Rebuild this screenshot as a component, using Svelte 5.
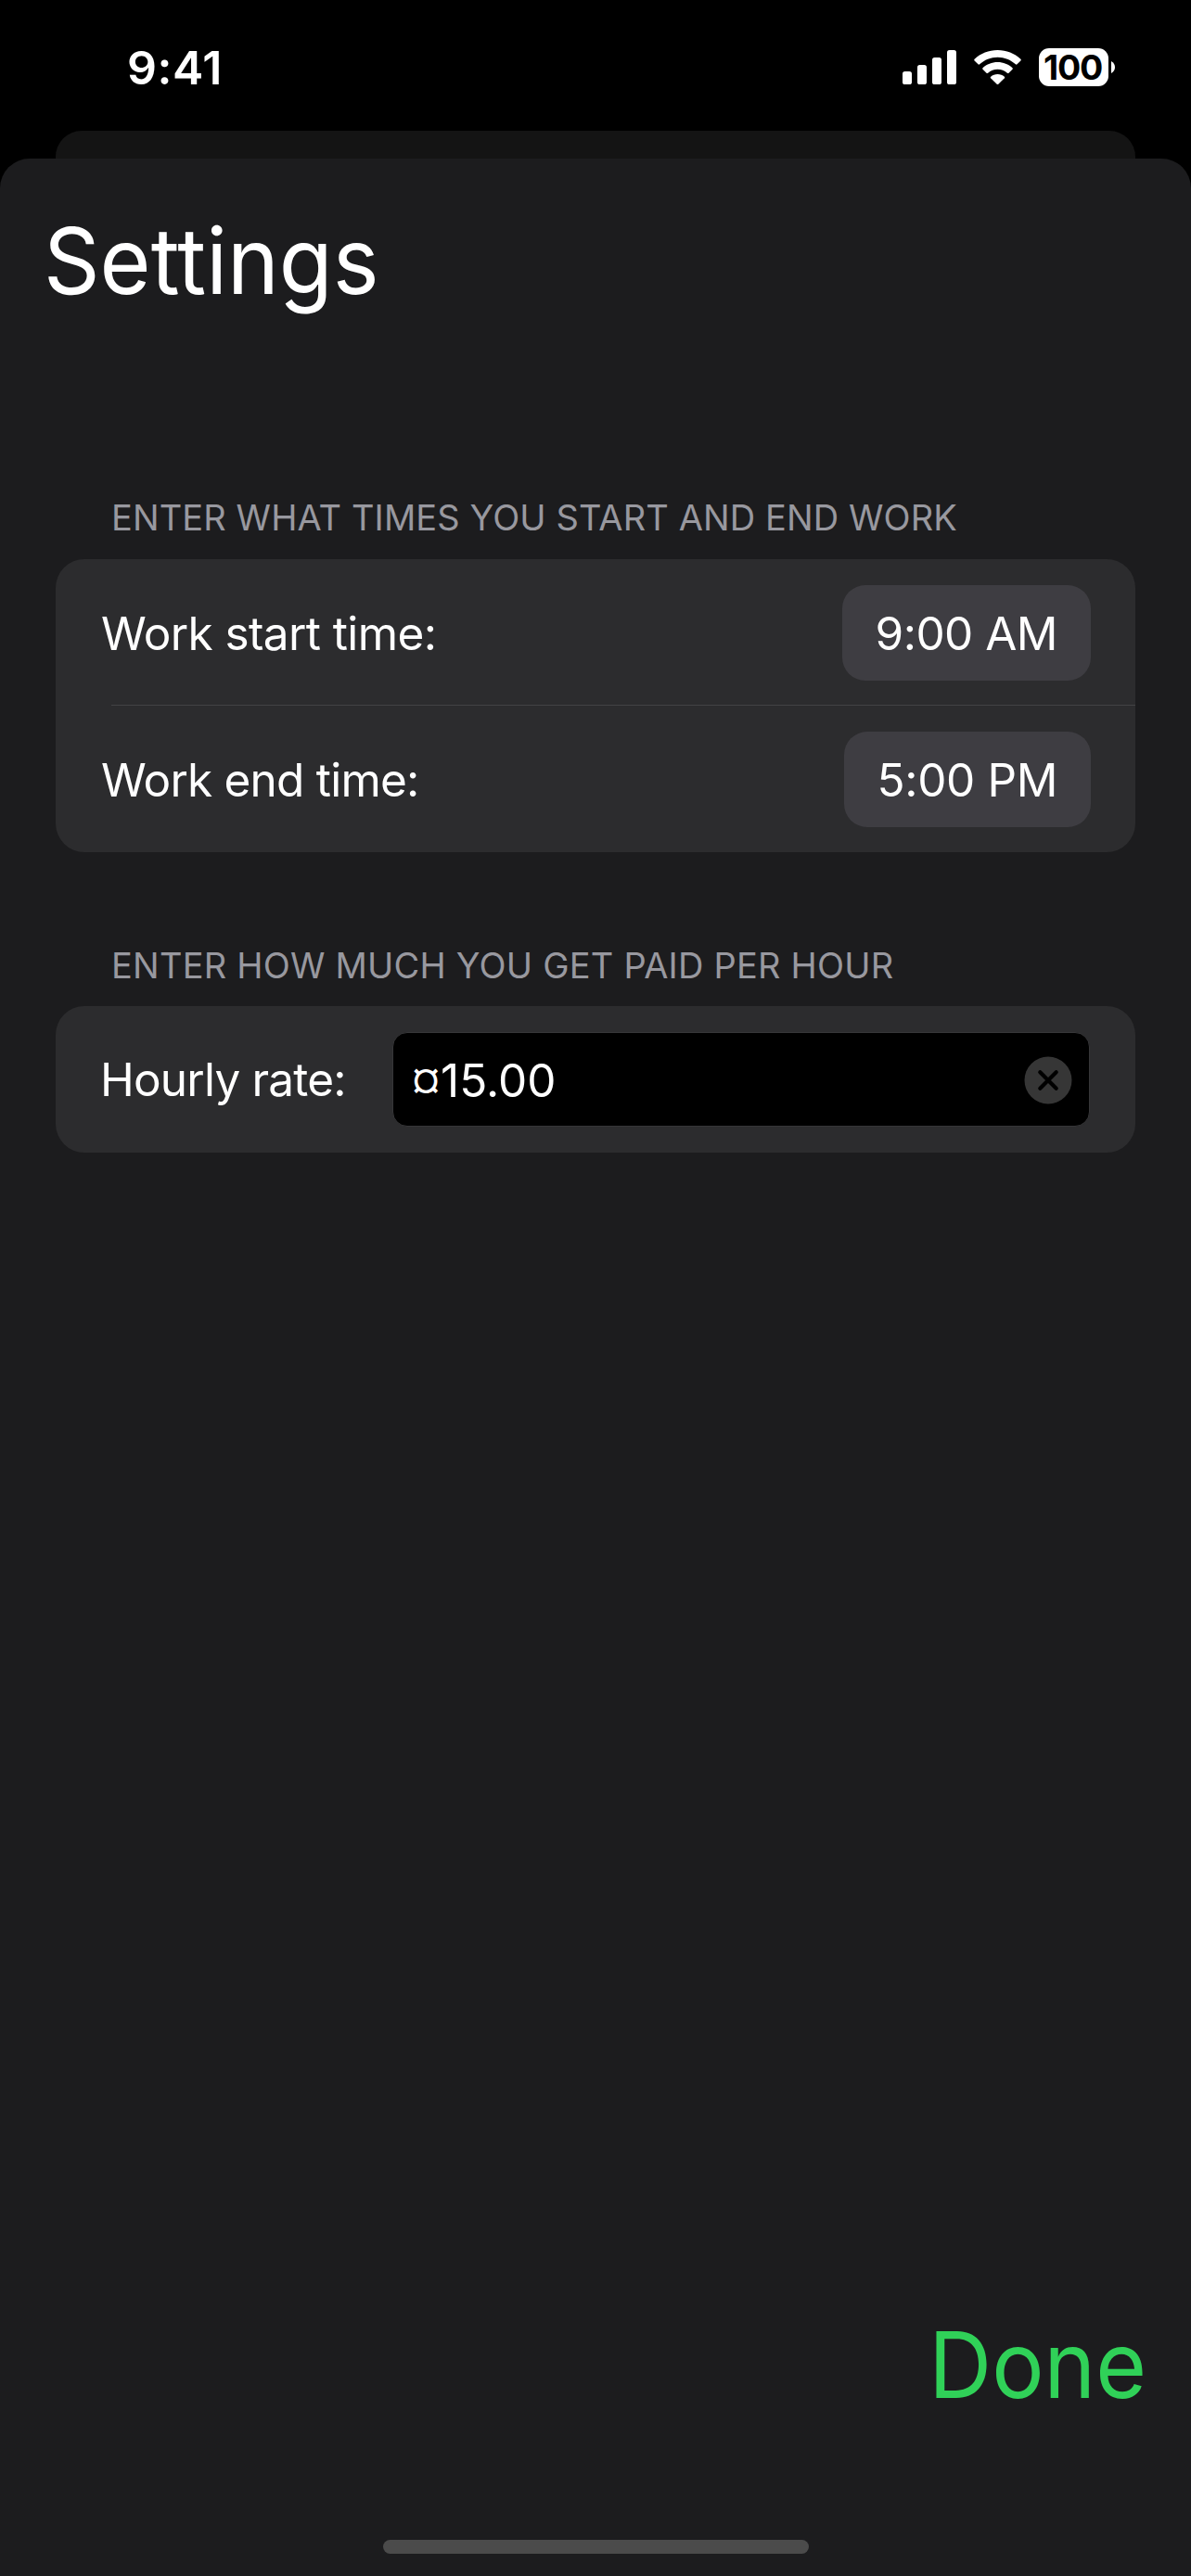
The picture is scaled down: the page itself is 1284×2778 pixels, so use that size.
<script>
  const shifts = [
    { label: 'Work start time:', value: '9:00 AM', kind: 'start' },
    { label: 'Work end time:', value: '5:00 PM', kind: 'end' }
  ];
  const currency = '¤';
  const amount = '15.00';
</script>

<div class="screen">
  <header class="status">
    <span class="clock">9:41</span>
    <div class="indicators">
      <svg class="signal" width="58" height="38" viewBox="0 0 58 38" fill="#fff">
        <rect x="0" y="23" width="10" height="14" rx="2.6" />
        <rect x="16" y="16" width="10" height="21" rx="2.6" />
        <rect x="32" y="8" width="10" height="29" rx="2.6" />
        <rect x="48" y="0" width="10" height="37" rx="2.6" />
      </svg>
      <svg class="wifi" width="51" height="38" viewBox="0 0 51 38" fill="#fff">
        <path d="M25.5 0C35 0 43.8 3.6 50.4 9.7Q51.2 10.5 50.4 11.4L46.5 15.3Q45.7 16 44.9 15.3C39.7 10.5 32.9 7.7 25.5 7.7C18.1 7.7 11.3 10.5 6.1 15.3Q5.3 16 4.5 15.3L.6 11.4Q-.2 10.5 .6 9.7C7.2 3.6 16 0 25.5 0Z" />
        <path d="M25.5 13.1C31.6 13.1 37.2 15.4 41.5 19.2Q42.3 20 41.5 20.8L37.5 24.7Q36.7 25.3 35.9 24.7C33.1 22.2 29.5 20.8 25.5 20.8C21.5 20.8 17.9 22.2 15.1 24.7Q14.3 25.3 13.5 24.7L9.5 20.8Q8.7 20 9.5 19.2C13.8 15.4 19.4 13.1 25.5 13.1Z" />
        <path d="M25.5 26C28.3 26 30.9 27 32.9 28.7Q33.7 29.5 32.9 30.3L26.3 36.7Q25.5 37.3 24.7 36.7L18.1 30.3Q17.3 29.5 18.1 28.7C20.1 27 22.7 26 25.5 26Z" />
      </svg>
      <div class="battery">
        <span class="charge">100</span>
        <svg width="4" height="13" viewBox="0 0 4 13" fill="#fff">
          <path d="M0 0C2.5 1.2 4 3.7 4 6.5S2.5 11.8 0 13Z" />
        </svg>
      </div>
    </div>
  </header>

  <div class="backdrop"></div>

  <main class="sheet">
    <h1>Settings</h1>

    <section>
      <h2>ENTER WHAT TIMES YOU START AND END WORK</h2>
      <div class="card">
        {#each shifts as shift}
          <div class="row time {shift.kind}">
            <span class="label">{shift.label}</span>
            <button class="pill">{shift.value}</button>
          </div>
        {/each}
      </div>
    </section>

    <section class="pay">
      <h2>ENTER HOW MUCH YOU GET PAID PER HOUR</h2>
      <div class="card">
        <div class="row rate">
          <span class="label">Hourly rate:</span>
          <div class="field">
            <span class="amount"><span class="currency">{currency}</span>{amount}</span>
            <svg width="52" height="52" viewBox="0 0 52 52">
              <circle cx="26" cy="26" r="25.5" fill="#363636" />
              <path d="M17.3 17.3L34.7 34.7M34.7 17.3L17.3 34.7" stroke="#000" stroke-width="4.2" stroke-linecap="round" />
            </svg>
          </div>
        </div>
      </div>
    </section>

    <button class="done">Done</button>
    <div class="home"></div>
  </main>
</div>

<style>
  :global(body) {
    margin: 0;
    background: #000;
  }
  .screen {
    width: 1284px;
    height: 2778px;
    display: flex;
    flex-direction: column;
    overflow: hidden;
    background: #000;
    color: #fff;
    font-family: Inter, 'Liberation Sans', sans-serif;
  }
  button {
    border: 0;
    background: none;
    font: inherit;
    color: inherit;
    white-space: nowrap;
  }

  .status {
    height: 141px;
    box-sizing: border-box;
    display: flex;
    justify-content: space-between;
    padding: 0 82px 0 137px;
  }
  .clock {
    font-size: 50px;
    font-weight: 600;
    letter-spacing: 0.5px;
    line-height: 147px;
  }
  .indicators {
    display: flex;
    align-items: flex-start;
    padding-top: 52px;
  }
  .signal {
    margin-top: 2px;
  }
  .wifi {
    margin: 2px 19px 0;
  }
  .battery {
    display: flex;
    align-items: center;
    gap: 3px;
  }
  .charge {
    width: 75px;
    height: 41px;
    border-radius: 11px;
    background: #fff;
    color: #000;
    font-size: 37.5px;
    font-weight: 700;
    letter-spacing: -1.2px;
    line-height: 42px;
    text-align: center;
    text-indent: -2px;
  }

  .backdrop {
    flex: none;
    height: 30px;
    margin: 0 60px;
    border-radius: 28px 28px 0 0;
    background: #141414;
  }
  .sheet {
    flex: 1;
    display: flex;
    flex-direction: column;
    border-radius: 32px 32px 0 0;
    background: #1c1c1e;
  }
  h1 {
    align-self: flex-start;
    margin: 50px 0 0 47px;
    font-size: 99px;
    font-weight: 400;
    line-height: 120px;
    transform: scaleX(0.954);
    transform-origin: left;
  }
  section {
    margin: 194px 60px 0;
  }
  section.pay {
    margin-top: 99px;
  }
  h2 {
    margin: 0 0 22px 60px;
    font-size: 38px;
    font-weight: 400;
    letter-spacing: 0.1px;
    line-height: 46px;
    color: #98989f;
    white-space: nowrap;
  }
  .pay h2 {
    margin-bottom: 21px;
    letter-spacing: 0.21px;
  }
  .card {
    border-radius: 31px;
    background: #2c2c2e;
  }
  .row {
    height: 158px;
    box-sizing: border-box;
    display: flex;
    align-items: center;
    justify-content: space-between;
    padding: 28px 48px 27px 49px;
    font-size: 49.5px;
  }
  .start {
    background: linear-gradient(#434345, #434345) right bottom / calc(100% - 60px) 1px no-repeat;
  }
  .label {
    letter-spacing: -0.6px;
    line-height: 60px;
    white-space: nowrap;
  }
  .end .label {
    letter-spacing: -0.78px;
  }
  .rate .label {
    letter-spacing: -0.8px;
  }
  .pill {
    height: 103px;
    padding: 0 36px;
    border-radius: 25px;
    background: #3e3d42;
    letter-spacing: -0.53px;
    line-height: 105px;
  }
  .end .pill {
    letter-spacing: -0.38px;
  }
  .rate {
    padding: 28px 49px 28px 48px;
  }
  .field {
    flex: none;
    width: 752px;
    height: 102px;
    box-sizing: border-box;
    display: flex;
    align-items: center;
    justify-content: space-between;
    padding: 2px 18px 0 20px;
    border: 1px solid #363638;
    border-radius: 16px;
    background: #000;
  }
  .amount {
    padding-top: 2px;
    line-height: 60px;
  }
  .currency {
    display: inline-block;
    width: 31px;
    font-size: 42px;
    transform: translateY(-4px);
  }
  .done {
    align-self: flex-end;
    margin: auto 48px 0 0;
    padding: 0;
    font-size: 99px;
    line-height: 120px;
    color: #30d158;
    transform: scaleX(0.95);
    transform-origin: right;
  }
  .home {
    width: 459px;
    height: 15px;
    margin: 129px auto 24px;
    border-radius: 8px;
    background: #4b4b4b;
  }
</style>
